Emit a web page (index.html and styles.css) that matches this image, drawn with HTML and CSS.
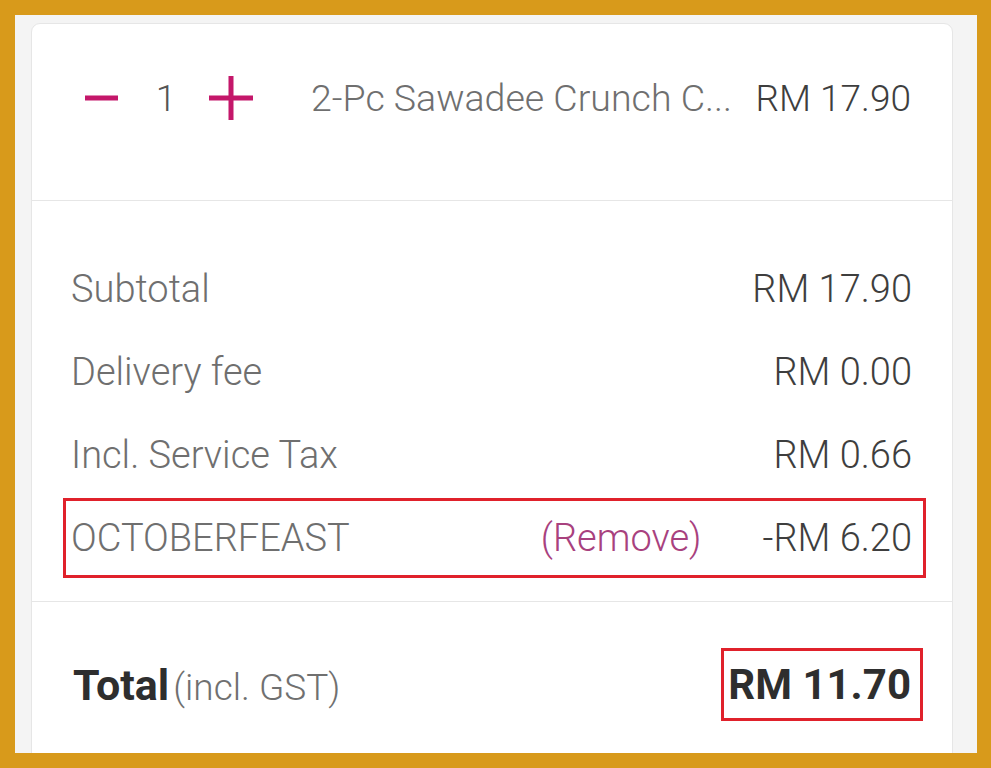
FILE: index.html
```html
<!DOCTYPE html>
<html lang="en">
<head>
<meta charset="utf-8">
<title>Cart summary</title>
<link rel="stylesheet" href="styles.css">
</head>
<body>
<div class="frame">
  <div class="card">
    <div class="item-row">
      <button class="qty-btn minus" aria-label="Decrease">
        <svg width="33" height="6" viewBox="0 0 33 6"><rect x="0" y="0.5" width="33" height="5" fill="#c4176a"/></svg>
      </button>
      <span class="qty">1</span>
      <button class="qty-btn plus" aria-label="Increase">
        <svg width="44" height="44" viewBox="0 0 44 44"><rect x="0" y="19.5" width="44" height="5" fill="#c4176a"/><rect x="19.5" y="0" width="5" height="44" fill="#c4176a"/></svg>
      </button>
      <span class="item-name">2-Pc Sawadee Crunch C...</span>
      <span class="item-price">RM 17.90</span>
    </div>
    <div class="summary">
      <div class="sum-row"><span class="sum-label">Subtotal</span><span class="sum-value">RM 17.90</span></div>
      <div class="sum-row"><span class="sum-label">Delivery fee</span><span class="sum-value">RM 0.00</span></div>
      <div class="sum-row"><span class="sum-label">Incl. Service Tax</span><span class="sum-value">RM 0.66</span></div>
      <div class="sum-row promo"><span class="sum-label">OCTOBERFEAST</span><span class="remove">(Remove)</span><span class="sum-value">-RM 6.20</span></div>
    </div>
    <div class="total">
      <span class="total-label"><b>Total</b> <span class="total-note">(incl. GST)</span></span>
      <span class="total-value">RM 11.70</span>
    </div>
  </div>
</div>
</body>
</html>
```
FILE: styles.css
```css
* { box-sizing: border-box; }
html, body { margin: 0; padding: 0; }
body {
  font-family: Roboto, "Liberation Sans", Arial, sans-serif;
  background: #d89a1b;
}
.frame {
  height: 768px;
  border: 15px solid #d89a1b;
  border-right-width: 14px;
  background: #f4f4f4;
  padding: 8px 24px 0 16px;
  overflow: hidden;
}
.card {
  background: #fff;
  border: 1px solid #e6e6e6;
  border-radius: 9px;
  height: 900px;
}
.item-row {
  display: flex;
  align-items: center;
  height: 177px;
  padding: 0 41px 28px 53px;
  border-bottom: 1px solid #e6e6e6;
}
.qty-btn {
  border: 0;
  background: none;
  padding: 0;
  display: flex;
  align-items: center;
}
.qty {
  width: 40px;
  margin: 0 23px 0 28px;
  text-align: center;
  font-size: 37px;
  font-weight: 300;
  color: #555;
}
.item-name {
  flex: 1;
  min-width: 0;
  margin-left: 58px;
  white-space: nowrap;
  font-size: 37.5px;
  font-weight: 300;
  color: #6f6f6f;
}
.item-price {
  font-size: 37px;
  font-weight: 300;
  color: #3e3e3e;
  white-space: nowrap;
}
.summary {
  padding: 46px 40px 22px 39px;
  border-bottom: 1px solid #e6e6e6;
}
.sum-row {
  display: flex;
  align-items: center;
  height: 83px;
  font-size: 38px;
  font-weight: 300;
}
.sum-label { flex: 1; color: #6f6f6f; }
.sum-value { color: #3e3e3e; white-space: nowrap; }
.promo {
  height: 80px;
  margin: 2px -14px 1px -8px;
  padding: 0 11px 0 5px;
  border: 3px solid #e0212b;
}
.remove {
  color: #a8417e;
  margin-right: 61px;
}
.total {
  display: flex;
  align-items: center;
  justify-content: space-between;
  padding: 46px 29px 0 41px;
}
.total-label b {
  font-size: 43px;
  font-weight: 700;
  color: #2e2e2e;
}
.total-note {
  font-size: 37px;
  font-weight: 300;
  color: #707070;
}
.total-value {
  display: block;
  height: 73px;
  line-height: 67px;
  padding: 0 9px 0 4px;
  border: 3px solid #e0212b;
  font-size: 42px;
  font-weight: 700;
  color: #2e2e2e;
}
```
